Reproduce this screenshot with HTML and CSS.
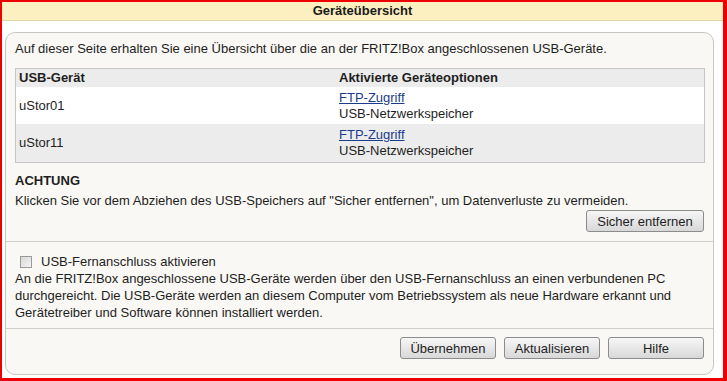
FILE: index.html
```html
<!DOCTYPE html>
<html lang="de">
<head>
<meta charset="utf-8">
<title>Geräteübersicht</title>
<link rel="stylesheet" href="styles.css">
</head>
<body>
<div class="frame">
  <div class="titlebar">Geräteübersicht</div>
  <div class="panel">
    <div class="section first">
      <p class="intro">Auf dieser Seite erhalten Sie eine Übersicht über die an der FRITZ!Box angeschlossenen USB-Geräte.</p>
      <table class="devices">
        <thead>
          <tr><th class="c1">USB-Gerät</th><th>Aktivierte Geräteoptionen</th></tr>
        </thead>
        <tbody>
          <tr class="odd"><td class="c1">uStor01</td><td><a href="#">FTP-Zugriff</a><br>USB-Netzwerkspeicher</td></tr>
          <tr class="even"><td class="c1">uStor11</td><td><a href="#">FTP-Zugriff</a><br>USB-Netzwerkspeicher</td></tr>
        </tbody>
      </table>
      <h4 class="warn">ACHTUNG</h4>
      <p class="warntext">Klicken Sie vor dem Abziehen des USB-Speichers auf "Sicher entfernen", um Datenverluste zu vermeiden.</p>
      <div class="btnrow"><button class="btn wide">Sicher entfernen</button></div>
    </div>
    <div class="section second">
      <label class="check"><input type="checkbox" class="cb"><span>USB-Fernanschluss aktivieren</span></label>
      <p class="desc">An die FRITZ!Box angeschlossene USB-Geräte werden über den USB-Fernanschluss an einen verbundenen PC durchgereicht. Die USB-Geräte werden an diesem Computer vom Betriebssystem als neue Hardware erkannt und Gerätetreiber und Software können installiert werden.</p>
    </div>
    <div class="section third">
      <div class="btnrow gap">
        <button class="btn">Übernehmen</button>
        <button class="btn">Aktualisieren</button>
        <button class="btn">Hilfe</button>
      </div>
    </div>
  </div>
</div>
</body>
</html>
```
FILE: styles.css
```css
html, body {
  margin: 0;
  padding: 0;
  background: #ffffff;
}
body {
  font-family: "Liberation Sans", Arial, sans-serif;
  font-size: 13px;
  color: #1e1e1e;
}
.frame {
  box-sizing: border-box;
  width: 727px;
  height: 381px;
  border-style: solid;
  border-color: #ee0000;
  border-width: 2px 4px 3px 2px;
  background: #ffffff;
  display: flex;
  flex-direction: column;
}
.titlebar {
  height: 18px;
  line-height: 17px;
  background: #fcf0c1;
  border-bottom: 1px solid #e2d6a6;
  text-align: center;
  font-weight: bold;
  color: #1a1a1a;
}
.panel {
  margin: 11px 9px 3px 3px;
  flex: 1;
  border: 1px solid #c9c7c2;
  border-radius: 10px;
  background: #f9f8f4;
  display: flex;
  flex-direction: column;
}
.section {
  padding: 0 9px;
}
.section.first {
  padding-top: 7px;
  height: 201px;
}
.intro {
  margin: 0;
  line-height: 17px;
}
.devices {
  margin-top: 11px;
  width: 690px;
  border-collapse: collapse;
  border: 1px solid #c6c6c6;
}
.devices th {
  text-align: left;
  font-weight: bold;
  background: #ececec;
  height: 18px;
  padding: 0 3px;
  line-height: 18px;
}
.devices td {
  vertical-align: middle;
  padding: 2px 3px 2px 3px;
  line-height: 16px;
}
.devices .c1 {
  width: 314px;
}
.devices tr.odd td {
  background: #ffffff;
  height: 33px;
}
.devices tr.even td {
  background: #ececec;
  height: 34px;
}
.devices a {
  color: #1b3c8c;
  text-decoration: underline;
}
.warn {
  margin: 9px 0 0 0;
  font-size: 13px;
  font-weight: bold;
  line-height: 18px;
}
.warntext {
  margin: 2px 0 0 0;
  line-height: 18px;
}
.btnrow {
  display: flex;
  justify-content: flex-end;
  margin-top: 0;
}
.btnrow.gap {
  gap: 8px;
  margin-top: 0;
}
.btn {
  font-family: "Liberation Sans", Arial, sans-serif;
  font-size: 13px;
  color: #1e1e1e;
  height: 22px;
  width: 96px;
  padding: 0;
  border: 1px solid #8c8c8c;
  border-radius: 3px;
  background: linear-gradient(#f6f6f6, #e4e4e4 60%, #d8d8d8);
}
.btn.wide {
  width: 118px;
}
.section.second {
  border-top: 1px solid #cfcdc8;
  padding-top: 11px;
  height: 75px;
}
.check {
  display: flex;
  align-items: center;
  height: 17px;
  padding-left: 5px;
}
.cb {
  appearance: none;
  -webkit-appearance: none;
  box-sizing: border-box;
  width: 12px;
  height: 12px;
  margin: 0 9px 0 0;
  border: 1px solid #9a9a9a;
  background: linear-gradient(135deg, #d8d8d8, #f4f4f4);
}
.desc {
  margin: 0;
  line-height: 17px;
}
.section.third {
  border-top: 1px solid #cfcdc8;
  padding-top: 8px;
}
```
